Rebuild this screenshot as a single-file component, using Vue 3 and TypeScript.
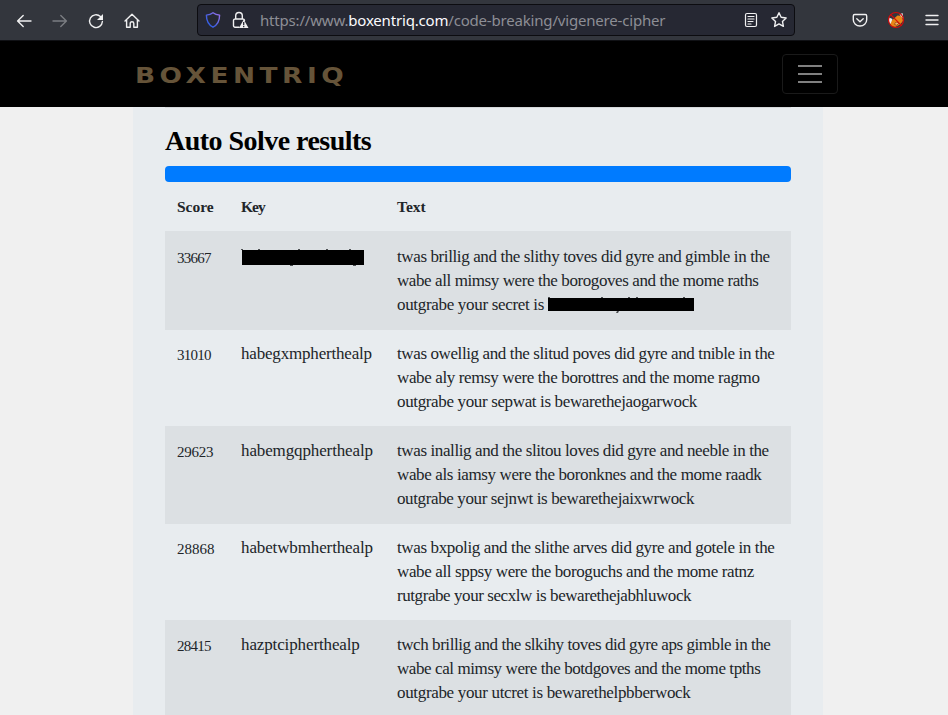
<script setup lang="ts">
import type { Directive } from 'vue'

interface Line { text: string; width: number; redacted?: boolean }
interface Result { score: string; scoreWidth: number; key: string; keyWidth: number; hidden?: boolean; lines: Line[] }

const results: Result[] = [
  { score: '33667', scoreWidth: 35, key: '', keyWidth: 0, hidden: true, lines: [
    { text: 'twas brillig and the slithy toves did gyre and gimble in the', width: 373 },
    { text: 'wabe all mimsy were the borogoves and the mome raths', width: 362 },
    { text: 'outgrabe your secret is', width: 147, redacted: true }] },
  { score: '31010', scoreWidth: 35, key: 'habegxmpherthealp', keyWidth: 131, lines: [
    { text: 'twas owellig and the slitud poves did gyre and tnible in the', width: 378 },
    { text: 'wabe aly remsy were the borottres and the mome ragmo', width: 363 },
    { text: 'outgrabe your sepwat is bewarethejaogarwock', width: 300 }] },
  { score: '29623', scoreWidth: 37, key: 'habemgqpherthealp', keyWidth: 132, lines: [
    { text: 'twas inallig and the slitou loves did gyre and neeble in the', width: 372 },
    { text: 'wabe als iamsy were the boronknes and the mome raadk', width: 365 },
    { text: 'outgrabe your sejnwt is bewarethejaixwrwock', width: 297 }] },
  { score: '28868', scoreWidth: 38, key: 'habetwbmherthealp', keyWidth: 132, lines: [
    { text: 'twas bxpolig and the slithe arves did gyre and gotele in the', width: 378 },
    { text: 'wabe all sppsy were the boroguchs and the mome ratnz', width: 357 },
    { text: 'rutgrabe your secxlw is bewarethejabhluwock', width: 295 }] },
  { score: '28415', scoreWidth: 35, key: 'hazptcipherthealp', keyWidth: 119, lines: [
    { text: 'twch brillig and the slkihy toves did gyre aps gimble in the', width: 374 },
    { text: 'wabe cal mimsy were the botdgoves and the mome tpths', width: 364 },
    { text: 'outgrabe your utcret is bewarethelpbberwock', width: 294 }] },
]

// Tracks the text so that its line measures the given width.
const vFit: Directive<HTMLElement, number> = {
  mounted(el, { value }) {
    const count = (el.textContent ?? '').length
    if (count < 2) return
    const gap = (value - el.offsetWidth) / (count - 1)
    el.style.letterSpacing = `${gap}px`
  },
}
</script>

<template>
  <div class="window">
    <header class="toolbar">
      <nav class="nav-icons">
        <svg width="16" height="16" viewBox="0 0 16 16"><path d="M15 8H1.800M7.200 2.400 1.600 8l5.600 5.600" /></svg>
        <svg class="dim" width="16" height="16" viewBox="0 0 16 16"><path d="M1 8h13.200M8.800 2.400 14.400 8l-5.600 5.600" /></svg>
        <svg width="16" height="16" viewBox="0 0 16 16"><path d="M12.400 3.500A6.400 6.400 0 1 0 14.400 8.500" /><path class="solid" d="M15 1v6H9z" /></svg>
        <svg width="16" height="16" viewBox="0 0 16 16"><path d="M1 8.100 8 1.300l7 6.800M2.600 6.800v7.500h3.600v-3.800a1.800 1.800 0 0 1 3.600 0v3.800h3.600V6.800" /></svg>
      </nav>
      <div class="address">
        <svg width="16" height="16" viewBox="0 0 16 16">
          <defs><linearGradient id="shield" x1="0" y1="1" x2="1" y2="0"><stop offset="0" stop-color="#245ee8" /><stop offset=".45" stop-color="#4c60df" /><stop offset="1" stop-color="#a175ed" /></linearGradient></defs>
          <path class="shield" d="M8 .8c2 1.500 4.100 2.100 6.600 2.300 0 5.900-1.600 9.700-6.600 12.100C3 12.800 1.400 9 1.400 3.100 3.900 2.900 6 2.300 8 .8z" />
        </svg>
        <svg class="lock" width="17" height="18" viewBox="0 0 17 18"><path d="M3.700 8V4.800a3.300 3.300 0 0 1 6.600 0V8M7 16.300H3A1.500 1.500 0 0 1 1.500 14.800V9.500A1.500 1.500 0 0 1 3 8h8a1.500 1.500 0 0 1 1.500 1.500" /><path class="solid" d="M11.700 8.500 16.500 17H7z" /><path class="mark" d="M11.700 11v3.200M11.700 15v1.200" /></svg>
        <div class="url"><span v-fit="406">https://www.<b>boxentriq.com</b>/code-breaking/vigenere-cipher</span></div>
        <svg class="reader" width="14" height="16" viewBox="0 0 14 16"><rect x="1.500" y="1.500" width="11" height="13" rx="1.500" /><path d="M4 4.500h6M4 7h6M4 9.500h5M4 12h3" /></svg>
        <svg width="18" height="18" viewBox="0 0 18 18"><path d="m9 1.700 2.150 4.600 5 .650-3.700 3.450.95 5L9 12.950l-4.400 2.450.95-5L1.850 6.950l5-.650z" /></svg>
      </div>
      <div class="tools">
        <svg width="16" height="16" viewBox="0 0 16 16"><path d="M2.700 2.500h10.600c.8 0 1.400.6 1.400 1.400v3.800a6.700 6.300 0 0 1-13.400 0V3.900c0-.8.6-1.400 1.400-1.400zM4.800 6.800 8 9.800l3.200-3" /></svg>
        <svg class="fox" width="18" height="18" viewBox="0 0 18 18">
          <path class="face" d="M3 11 7 7.500l3.500-3L15 5l1 5-3 3.500L8 16l-4-1z" /><path class="ears" d="m2 6.500 3.500 1.500L3.500 13 2 11zM12.500 3.500l3-1.500 1 6z" /><path class="snout" d="m7.500 13 1.500-2 3 1-2 2z" />
          <circle cx="9" cy="9" r="7.500" /><path class="ban" d="m3.700 3.700 10.600 10.600" />
        </svg>
        <svg width="14" height="16" viewBox="0 0 14 16"><path d="M1 3.500h12M1 8h12M1 12.500h12" /></svg>
      </div>
    </header>

    <div class="site-bar">
      <div class="site-inner">
        <div class="brand"><span v-fit="174">BOXENTRIQ</span></div>
        <button class="menu" aria-label="Menu"><i></i><i></i><i></i></button>
      </div>
    </div>

    <main class="panel">
      <h2><span v-fit="207">Auto Solve results</span></h2>
      <div class="progress"></div>
      <div class="table">
        <div class="row head">
          <div><span v-fit="37">Score</span></div>
          <div><span v-fit="25">Key</span></div>
          <div><span v-fit="29">Text</span></div>
        </div>
        <div v-for="r in results" :key="r.score" class="row">
          <div class="score"><span v-fit="r.scoreWidth">{{ r.score }}</span></div>
          <div>
            <svg v-if="r.hidden" class="bar" width="124" height="24" viewBox="0 0 124 24">
              <path d="M1 5h122v15H1z" /><path class="trace" d="M0 4h2v1H0zM17 4h2v1h-2zM57 4h2v1h-2zM85 4h2v1h-2zM108 4h2v1h-2zM49 20h3v1h-3zM112 20h3v1h-3z" />
            </svg>
            <span v-else v-fit="r.keyWidth">{{ r.key }}</span>
          </div>
          <div>
            <div v-for="l in r.lines" :key="l.text" class="line">
              <span v-fit="l.width">{{ l.text }}</span>
              <svg v-if="l.redacted" class="bar text-bar" width="146" height="24" viewBox="0 0 146 24">
                <path d="M0 5h146v13H0z" /><path class="trace" d="M0 4h2v1H0zM53 4h2v1h-2zM80 4h2v1h-2zM88 4h2v1h-2zM135 4h2v1h-2zM69 18h2l-1 2h-2z" />
              </svg>
            </div>
          </div>
        </div>
      </div>
    </main>
  </div>
</template>

<style>
body { margin: 0; background: #f0f0f0; }
</style>

<style scoped>
* { box-sizing: border-box; }
.window { height: 715px; overflow: hidden; display: flex; flex-direction: column; }
svg { display: block; flex: none; fill: none; stroke: #f0f0f1; stroke-width: 1.4; stroke-linecap: round; stroke-linejoin: round; }
.toolbar { height: 41px; flex: none; display: flex; align-items: center; padding: 0 9px 0 16px; background: #33363d; border-bottom: 1px solid #101115; }
.nav-icons { display: flex; gap: 20px; width: 181px; flex: none; padding-top: 1px; }
.dim { stroke: #7b7d82; }
.solid { fill: #f0f0f1; stroke: none; }
.address { width: 598px; height: 32px; display: flex; align-items: center; padding: 0 6px 0 7px; background: #262833; border: 1px solid #0c0c10; border-radius: 4px; }
.shield { stroke: url(#shield); }
.lock { margin-left: 11px; }
.mark { stroke: #262833; stroke-width: 1.3; stroke-linecap: butt; }
.url { flex: 1; padding-left: 11px; font: 15px/30px "Noto Sans", sans-serif; color: #8d8e95; white-space: nowrap; }
.url b { font-weight: 400; color: #fbfbfe; }
.reader { margin-right: 12px; stroke-width: 1.2; }
.tools { margin-left: auto; display: flex; align-items: center; gap: 20px; }
.tools svg:first-child { margin-right: -1px; }
.ears { fill: #eee; stroke: none; }
.face { fill: #e88616; stroke: none; }
.snout { fill: #f0b276; stroke: #9d4a16; stroke-width: .8; }
.fox circle, .ban { stroke: #d40b0b; stroke-width: 1.2; }
.site-bar { height: 66px; flex: none; background: #000; }
.site-inner { width: 703px; height: 66px; margin-left: 135px; display: flex; align-items: center; justify-content: space-between; }
.brand { font: bold 22px/26px "DejaVu Sans", sans-serif; color: #665439; padding-top: 3px; transform: scaleX(1.2); transform-origin: 0 0; }
.menu { width: 56px; height: 40px; padding: 0; display: flex; flex-direction: column; align-items: center; justify-content: center; gap: 6px; background: none; border: 1px solid #1a1a1a; border-radius: 4px; }
.menu i { width: 24px; height: 2px; background: #808080; }
.panel { width: 690px; flex: 1; margin-left: 133px; padding: 0 32px; background: #e8ecef; font-family: "Liberation Serif", serif; color: #212529; }
h2 { width: 626px; margin: 0; height: 59px; padding-top: 15px; border-top: 1px solid #d5d8db; font: bold 28px/36px "Liberation Serif", serif; color: #000; white-space: nowrap; }
.progress { width: 626px; height: 16px; border-radius: 4px; background: #007bff; }
.table { width: 626px; font-size: 17px; line-height: 24px; }
.row { display: grid; grid-template-columns: 64px 156px 1fr; height: 96px; padding: 12px 0 0 12px; white-space: nowrap; }
.row:nth-child(even) { height: 98px; padding-top: 13px; background: #dce0e3; }
.row:nth-child(2) { height: 99px; padding-top: 14px; }
.row.head { height: 49px; padding-top: 13px; font-weight: bold; font-size: 15.5px; }
.score { font-size: 15px; padding-top: 1px; }
.line { display: flex; height: 24px; }
.bar { fill: #000; stroke: none; }
.trace { fill: #4d5053; }
.text-bar { margin-left: 4px; }
</style>
